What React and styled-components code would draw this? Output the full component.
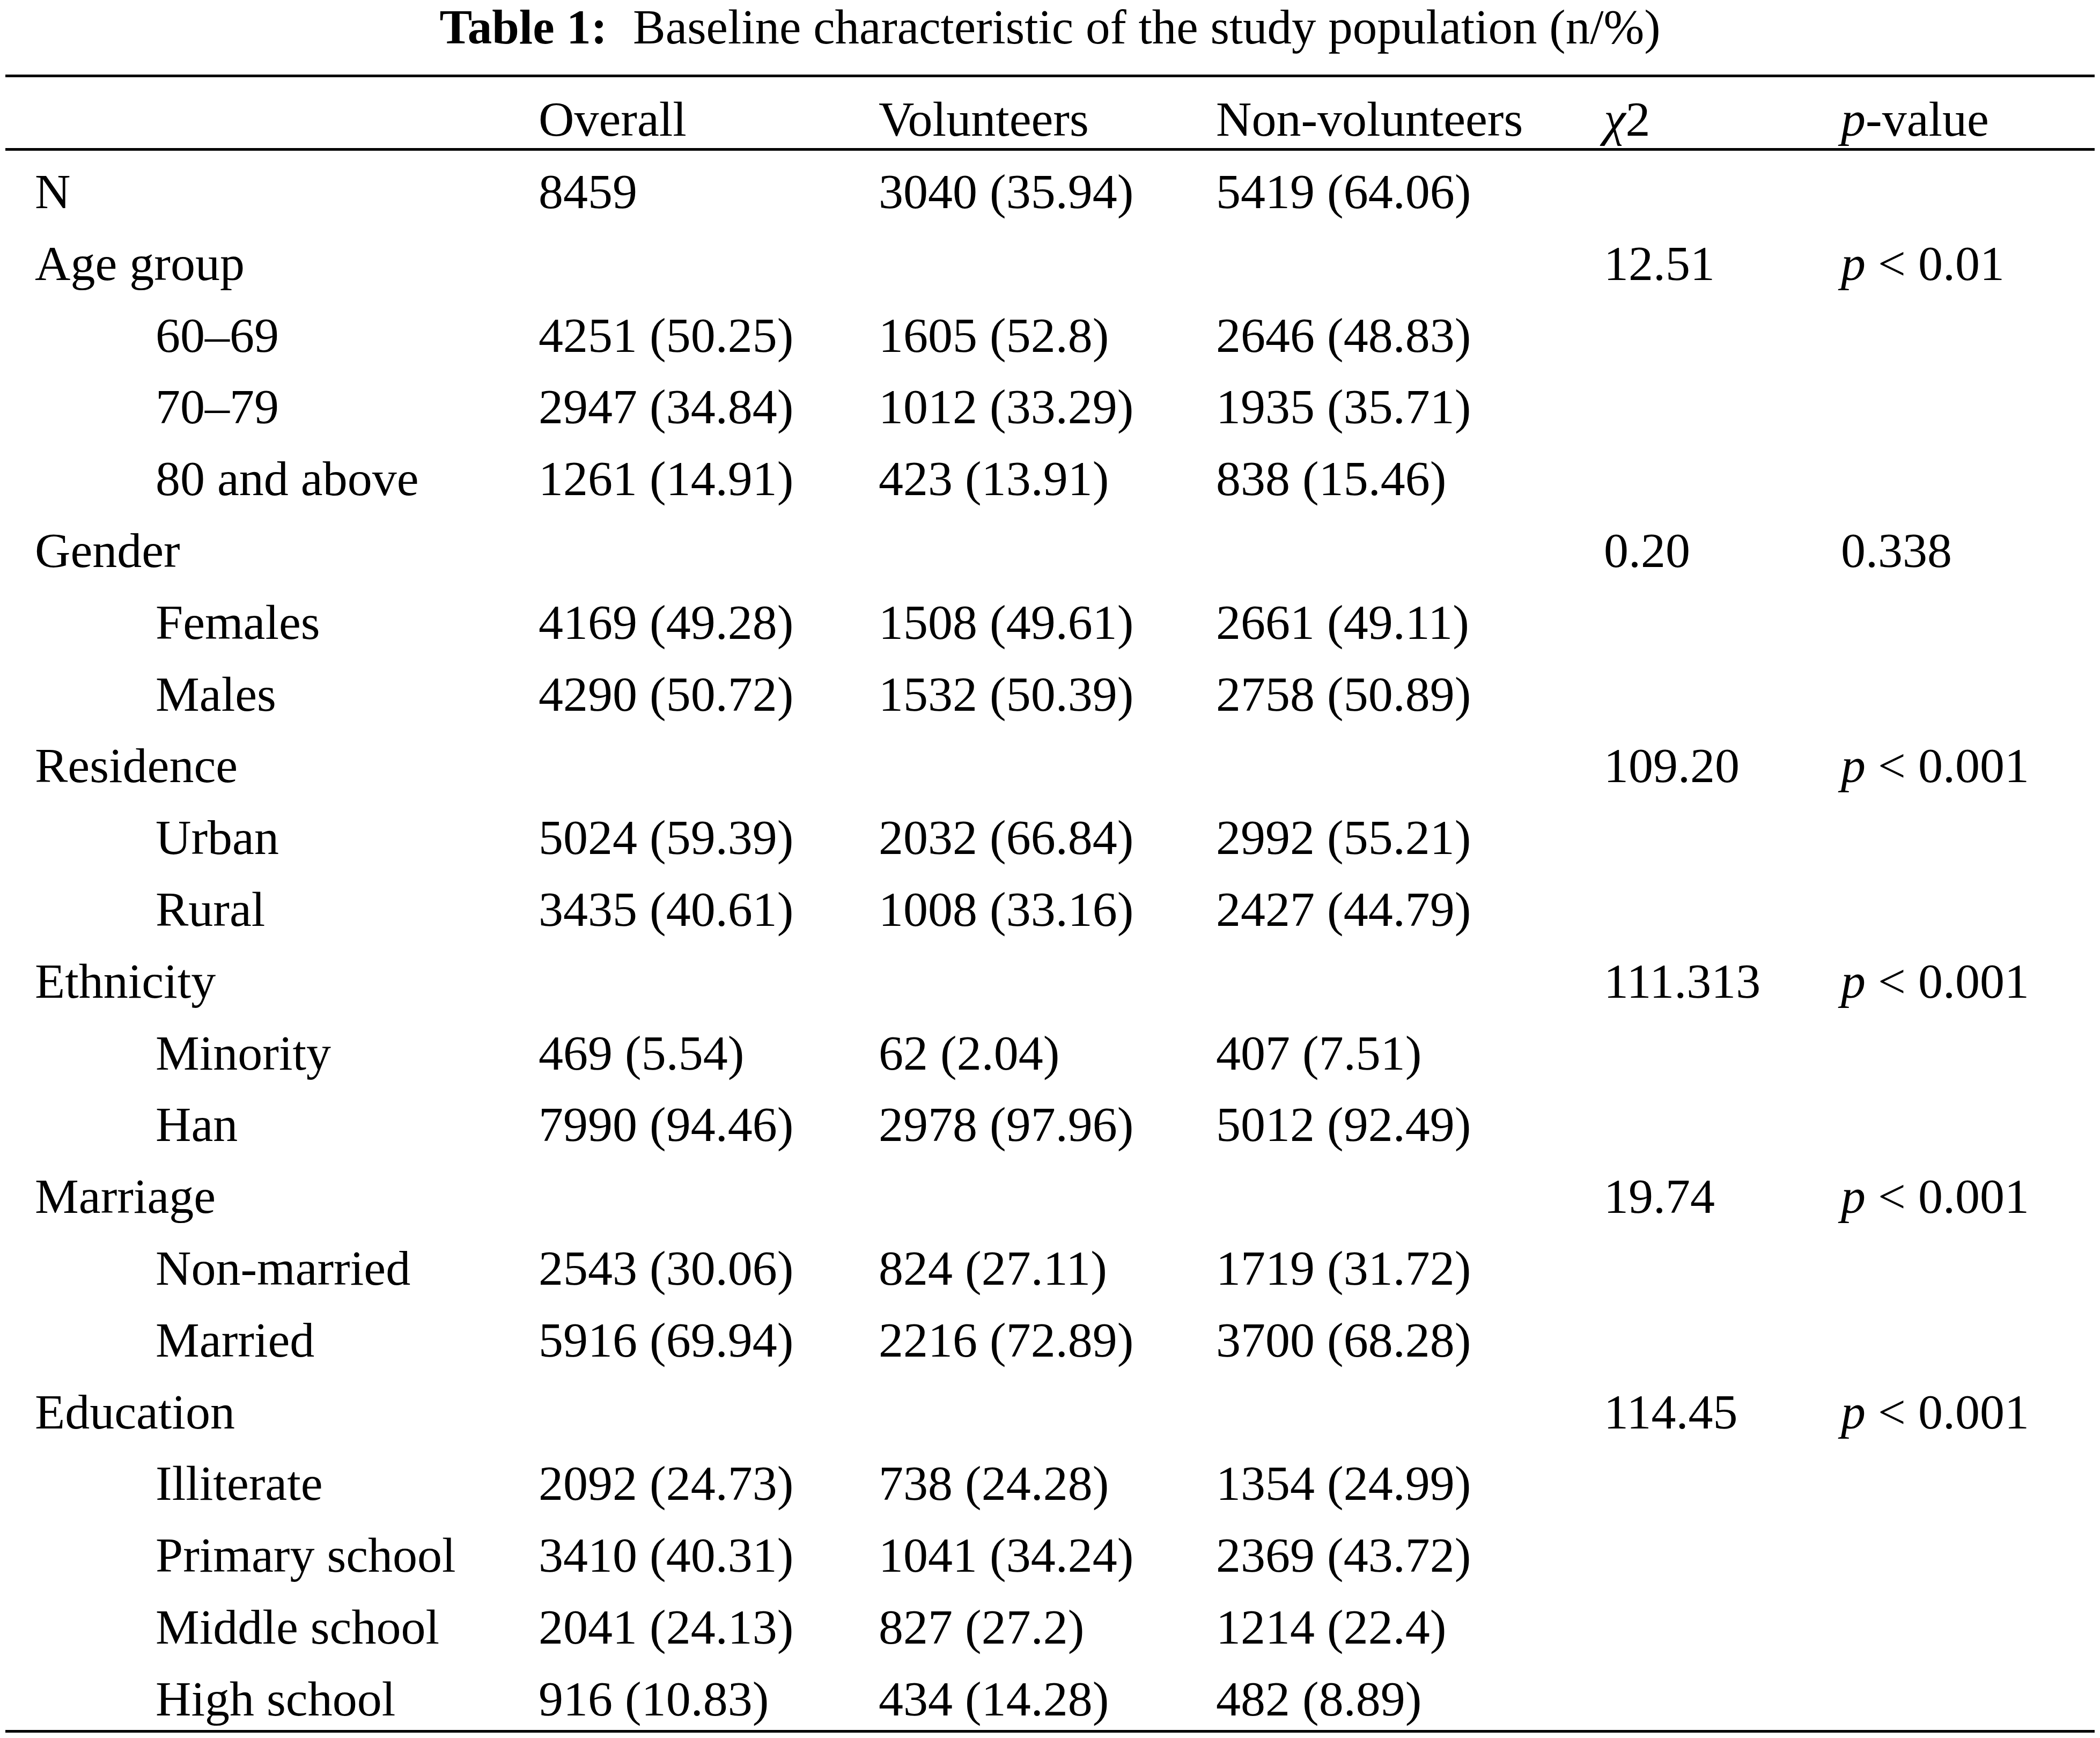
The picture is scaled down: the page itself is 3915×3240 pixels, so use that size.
import React from "react";
import styled, { createGlobalStyle } from "styled-components";

const Global = createGlobalStyle`
  html, body { margin: 0; padding: 0; background: #ffffff; }
  body { font-family: "Liberation Serif", "Times New Roman", serif; color: #000; }
`;

const Page = styled.div`
  width: 3915px;
  height: 3240px;
  box-sizing: border-box;
  padding: 0 10px;
  background: #fff;
`;

const Caption = styled.div`
  font-size: 91px;
  line-height: 102px;
  text-align: center;
  white-space: nowrap;
  margin-bottom: 37px;
`;

const CaptionLabel = styled.span`
  font-weight: bold;
  margin-right: 48px;
`;

const Table = styled.div`
  border-top: 5px solid #000;
  border-bottom: 5px solid #000;
  font-size: 92px;
`;

const Row = styled.div`
  display: grid;
  grid-template-columns: 939px 634px 629px 723px 442px 1fr;
  padding-left: 55px;
  box-sizing: border-box;
  height: ${(p) => (p.$head ? "132px" : "133.8px")};
  padding-top: ${(p) => (p.$head ? "24px" : "20px")};
  line-height: ${(p) => (p.$head ? "108px" : "113.8px")};
  white-space: nowrap;
`;

const HeadRule = styled.div`
  border-top: 5px solid #000;
`;

const Cell = styled.div`
  padding-left: ${(p) => (p.$indent ? "225px" : "0")};
`;

const I = styled.i`
  font-style: italic;
`;

const rows = [
  ["N", false, "8459", "3040 (35.94)", "5419 (64.06)", "", null],
  ["Age group", false, "", "", "", "12.51", "0.01"],
  ["60–69", true, "4251 (50.25)", "1605 (52.8)", "2646 (48.83)", "", null],
  ["70–79", true, "2947 (34.84)", "1012 (33.29)", "1935 (35.71)", "", null],
  ["80 and above", true, "1261 (14.91)", "423 (13.91)", "838 (15.46)", "", null],
  ["Gender", false, "", "", "", "0.20", "plain:0.338"],
  ["Females", true, "4169 (49.28)", "1508 (49.61)", "2661 (49.11)", "", null],
  ["Males", true, "4290 (50.72)", "1532 (50.39)", "2758 (50.89)", "", null],
  ["Residence", false, "", "", "", "109.20", "0.001"],
  ["Urban", true, "5024 (59.39)", "2032 (66.84)", "2992 (55.21)", "", null],
  ["Rural", true, "3435 (40.61)", "1008 (33.16)", "2427 (44.79)", "", null],
  ["Ethnicity", false, "", "", "", "111.313", "0.001"],
  ["Minority", true, "469 (5.54)", "62 (2.04)", "407 (7.51)", "", null],
  ["Han", true, "7990 (94.46)", "2978 (97.96)", "5012 (92.49)", "", null],
  ["Marriage", false, "", "", "", "19.74", "0.001"],
  ["Non-married", true, "2543 (30.06)", "824 (27.11)", "1719 (31.72)", "", null],
  ["Married", true, "5916 (69.94)", "2216 (72.89)", "3700 (68.28)", "", null],
  ["Education", false, "", "", "", "114.45", "0.001"],
  ["Illiterate", true, "2092 (24.73)", "738 (24.28)", "1354 (24.99)", "", null],
  ["Primary school", true, "3410 (40.31)", "1041 (34.24)", "2369 (43.72)", "", null],
  ["Middle school", true, "2041 (24.13)", "827 (27.2)", "1214 (22.4)", "", null],
  ["High school", true, "916 (10.83)", "434 (14.28)", "482 (8.89)", "", null],
];

function PValue({ v }) {
  if (v == null) return null;
  if (v.startsWith("plain:")) return <>{v.slice(6)}</>;
  return (
    <>
      <I>p</I> &lt; {v}
    </>
  );
}

export default function App() {
  return (
    <Page>
      <Global />
      <Caption>
        <CaptionLabel>Table 1:</CaptionLabel>Baseline characteristic of the study population (n/%)
      </Caption>
      <Table>
        <Row $head>
          <Cell />
          <Cell>Overall</Cell>
          <Cell>Volunteers</Cell>
          <Cell>Non-volunteers</Cell>
          <Cell>
            <I>χ</I>2
          </Cell>
          <Cell>
            <I>p</I>-value
          </Cell>
        </Row>
        <HeadRule />
        {rows.map(([label, indent, a, b, c, chi, p]) => (
          <Row key={label}>
            <Cell $indent={indent}>{label}</Cell>
            <Cell>{a}</Cell>
            <Cell>{b}</Cell>
            <Cell>{c}</Cell>
            <Cell>{chi}</Cell>
            <Cell>
              <PValue v={p} />
            </Cell>
          </Row>
        ))}
      </Table>
    </Page>
  );
}
